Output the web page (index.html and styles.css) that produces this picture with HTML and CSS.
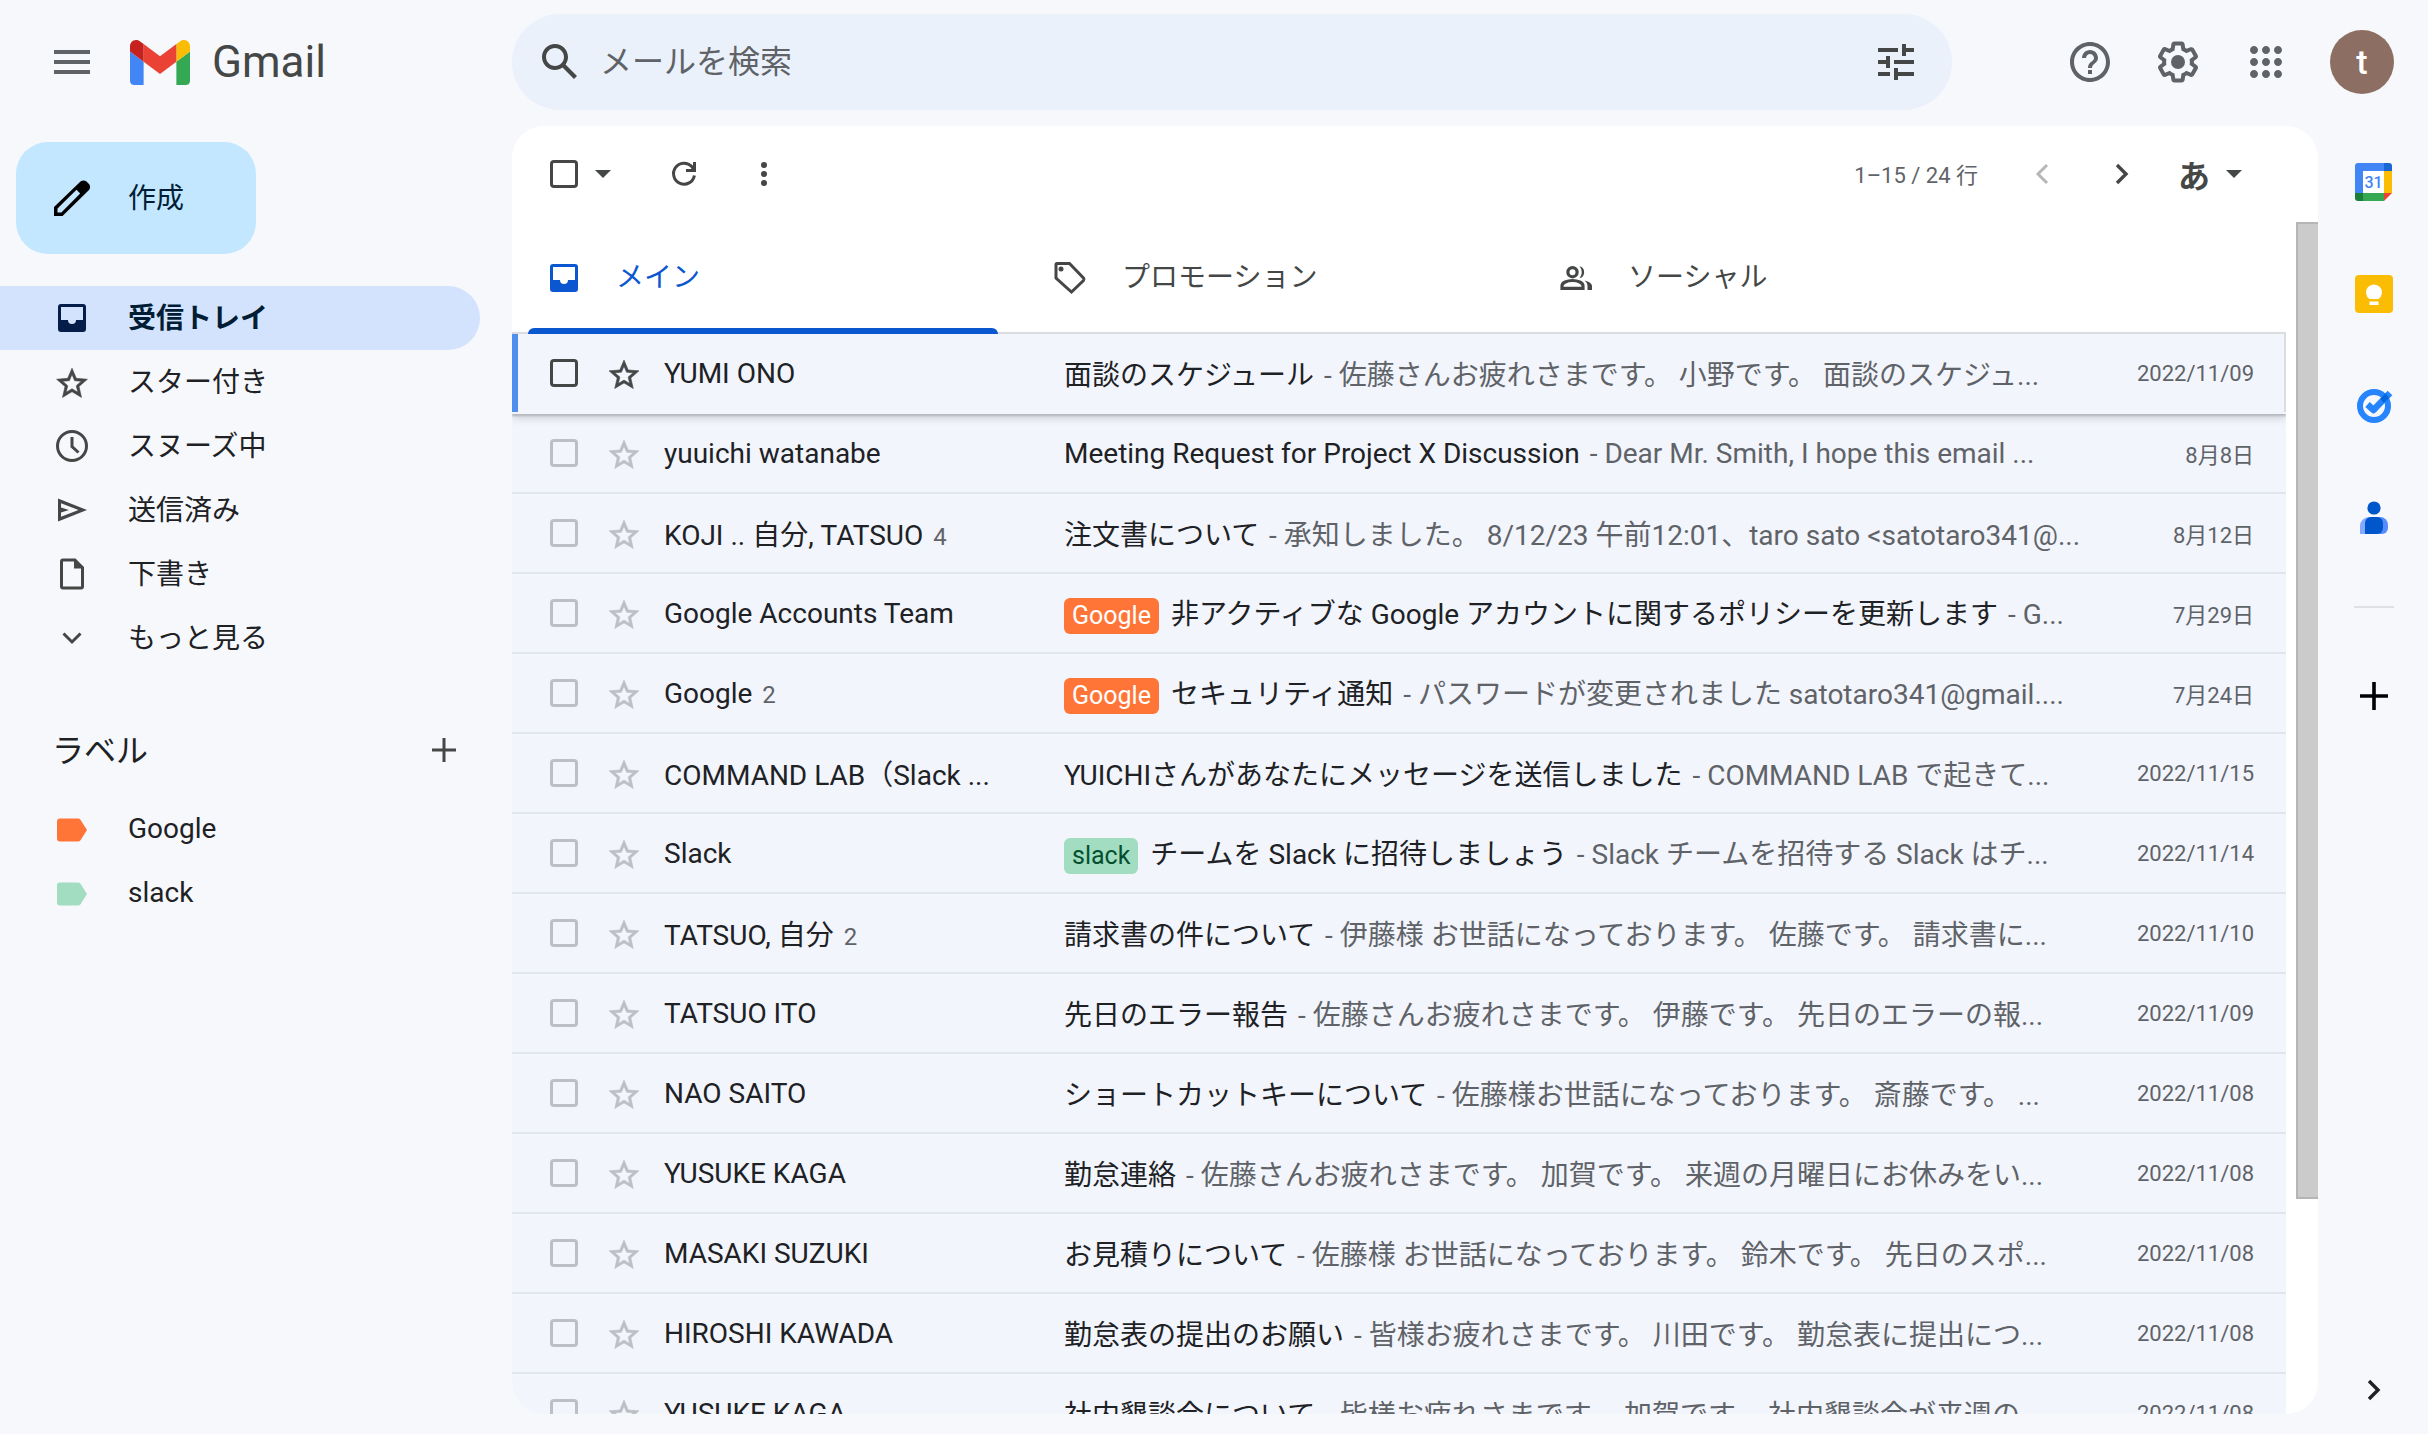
FILE: index.html
```html
<!DOCTYPE html>
<html lang="ja">
<head>
  <meta charset="UTF-8">
  <meta name="viewport" content="width=device-width, initial-scale=1.0">
  <title>受信トレイ - Gmail</title>

  <link rel="stylesheet" href="styles.css">
</head>
<body>

  <!-- Shared icons -->
  <svg class="sprite" aria-hidden="true">
    <symbol id="i-inbox" viewBox="0 0 40 40"><path fill-rule="evenodd" d="M9 6h22a3 3 0 0 1 3 3v22a3 3 0 0 1-3 3H9a3 3 0 0 1-3-3V9a3 3 0 0 1 3-3zM9 9v13h7a4 4 0 0 0 8 0h7V9z"/></symbol>
    <symbol id="i-star" viewBox="0 0 24 24"><path stroke="currentColor" stroke-width=".4" d="M22 9.24l-7.19-.62L12 2 9.19 8.63 2 9.24l5.46 4.73L5.82 21 12 17.27 18.18 21l-1.63-7.03L22 9.24zM12 15.4l-3.76 2.27 1-4.28-3.32-2.88 4.38-.38L12 6.1l1.71 4.04 4.38.38-3.32 2.88 1 4.28L12 15.4z"/></symbol>
    <symbol id="i-drop" viewBox="0 0 24 24"><path d="M4 8h16l-8 8z"/></symbol>
    <symbol id="i-label" viewBox="0 0 40 40"><path d="M8 8.500h18a3 3 0 0 1 2.500 1.300L35 20l-6.500 10.200a3 3 0 0 1-2.500 1.300H8a3 3 0 0 1-3-3v-17a3 3 0 0 1 3-3z"/></symbol>
    <symbol id="i-next" viewBox="0 0 40 40"><path d="M15 11l9 9-9 9" fill="none" stroke="currentColor" stroke-width="3.400"/></symbol>
  </svg>

  <!-- Top bar -->
  <header class="topbar">
    <div class="brand">
      <button class="icon-btn menu-btn" aria-label="メインメニュー">
        <svg width="36" height="24" viewBox="0 0 36 24"><path d="M0 0h36v4H0zM0 10h36v4H0zM0 20h36v4H0z"/></svg>
      </button>
      <a class="logo" href="#">
        <svg width="60" height="45" viewBox="52 42 88 66" aria-hidden="true">
          <path fill="#4285f4" d="M58 108h14V74L52 59v43c0 3.32 2.69 6 6 6"/>
          <path fill="#34a853" d="M120 108h14c3.32 0 6-2.69 6-6V59l-20 15"/>
          <path fill="#fbbc04" d="M120 48v26l20-15v-8c0-7.42-8.47-11.65-14.4-7.2"/>
          <path fill="#ea4335" d="M72 74V48l24 18 24-18v26L96 92"/>
          <path fill="#c5221f" d="M52 51v8l20 15V48l-5.6-4.2c-5.94-4.45-14.4-.22-14.4 7.2"/>
        </svg>
        <span>Gmail</span>
      </a>
    </div>

    <form class="search">
      <button class="icon-btn" type="button" aria-label="検索">
        <svg width="48" height="48" viewBox="0 0 24 24"><path d="M20.49 19l-5.73-5.73C15.53 12.2 16 10.91 16 9.5 16 5.91 13.09 3 9.5 3S3 5.91 3 9.5 5.91 16 9.5 16c1.410 0 2.700-.47 3.770-1.240L19 20.490 20.490 19zM5 9.500C5 7.010 7.010 5 9.500 5S14 7.010 14 9.500 11.990 14 9.500 14 5 11.990 5 9.500z"/></svg>
      </button>
      <input type="text" placeholder="メールを検索" aria-label="メールを検索">
      <button class="icon-btn" type="button" aria-label="検索オプション">
        <svg width="48" height="48" viewBox="0 0 24 24"><path d="M3 17v2h6v-2H3zM3 5v2h10V5H3zm10 16v-2h8v-2h-8v-2h-2v6h2zM7 9v2H3v2h4v2h2V9H7zm14 4v-2H11v2h10zm-6-4h2V7h4V5h-4V3h-2v6z"/></svg>
      </button>
    </form>

    <div class="account">
      <button class="icon-btn" aria-label="サポート">
        <svg width="48" height="48" viewBox="0 0 24 24"><path d="M11 18h2v-2h-2v2zm1-16C6.480 2 2 6.480 2 12s4.480 10 10 10 10-4.480 10-10S17.520 2 12 2zm0 18c-4.410 0-8-3.590-8-8s3.590-8 8-8 8 3.590 8 8-3.590 8-8 8zm0-14c-2.210 0-4 1.790-4 4h2c0-1.100.9-2 2-2s2 .9 2 2c0 2-3 1.750-3 5h2c0-2.250 3-2.500 3-5 0-2.210-1.790-4-4-4z"/></svg>
      </button>
      <button class="icon-btn" aria-label="設定">
        <svg width="48" height="48" viewBox="0 0 24 24"><path d="M13.85 22.25h-3.7c-.74 0-1.36-.54-1.45-1.27l-.27-1.89c-.27-.14-.53-.29-.79-.46l-1.8.72c-.7.26-1.47-.03-1.81-.65L2.2 15.53c-.35-.66-.2-1.44.36-1.88l1.53-1.19c-.01-.15-.02-.3-.02-.46 0-.15.01-.31.02-.46l-1.52-1.19c-.59-.45-.74-1.26-.37-1.88l1.85-3.19c.34-.62 1.11-.9 1.79-.63l1.81.73c.26-.17.52-.32.78-.46l.27-1.91c.09-.7.71-1.25 1.44-1.25h3.7c.74 0 1.36.54 1.45 1.27l.27 1.89c.27.14.53.29.79.46l1.8-.72c.71-.26 1.48.03 1.82.65l1.84 3.18c.36.66.2 1.44-.36 1.88l-1.52 1.19c.01.15.02.3.02.46s-.01.31-.02.46l1.52 1.19c.56.45.72 1.23.37 1.86l-1.86 3.22c-.34.62-1.11.9-1.8.63l-1.8-.72c-.26.17-.52.32-.78.46l-.27 1.91c-.1.68-.72 1.22-1.46 1.22zm-3.23-2h2.76l.37-2.55.53-.22c.44-.18.88-.44 1.34-.78l.45-.34 2.38.96 1.38-2.4-2.03-1.58.07-.56c.03-.26.06-.51.06-.78s-.03-.53-.06-.78l-.07-.56 2.03-1.58-1.39-2.4-2.39.96-.45-.35c-.42-.32-.87-.58-1.33-.77l-.52-.22-.37-2.55h-2.76l-.37 2.55-.53.21c-.44.19-.88.44-1.34.79l-.45.33-2.38-.95-1.39 2.39 2.03 1.58-.07.56a7 7 0 0 0-.06.79c0 .26.02.53.06.78l.07.56-2.03 1.58 1.38 2.4 2.39-.96.45.35c.43.33.86.58 1.33.77l.53.22.38 2.55z"/><circle cx="12" cy="12" r="3.5"/></svg>
      </button>
      <button class="icon-btn" aria-label="Google アプリ">
        <svg width="48" height="48" viewBox="0 0 24 24"><path d="M6 8c1.100 0 2-.9 2-2s-.9-2-2-2-2 .9-2 2 .9 2 2 2zm6 12c1.100 0 2-.9 2-2s-.9-2-2-2-2 .9-2 2 .9 2 2 2zm-6 0c1.100 0 2-.9 2-2s-.9-2-2-2-2 .9-2 2 .9 2 2 2zm0-6c1.100 0 2-.9 2-2s-.9-2-2-2-2 .9-2 2 .9 2 2 2zm6 0c1.100 0 2-.9 2-2s-.9-2-2-2-2 .9-2 2 .9 2 2 2zm4-8c0 1.100.9 2 2 2s2-.9 2-2-.9-2-2-2-2 .9-2 2zm-4 2c1.100 0 2-.9 2-2s-.9-2-2-2-2 .9-2 2 .9 2 2 2zm6 6c1.100 0 2-.9 2-2s-.9-2-2-2-2 .9-2 2 .9 2 2 2zm0 6c1.100 0 2-.9 2-2s-.9-2-2-2-2 .9-2 2 .9 2 2 2z"/></svg>
      </button>
      <button class="avatar" aria-label="Google アカウント">t</button>
    </div>
  </header>

  <div class="layout">

    <!-- Sidebar -->
    <aside class="sidebar">
      <button class="compose">
        <svg width="40" height="40" viewBox="0 0 40 40"><path fill-rule="evenodd" d="M2 38V29L28.500 3.500a5 5 0 0 1 6 0l2.500 2.500a5 5 0 0 1 0 6L10.500 38zM5.500 30.500v4h3.800L28.200 15.500l-3.700-3.700z"/></svg>
        作成
      </button>

      <nav class="folders">
        <a class="active" href="#"><svg width="40" height="40"><use href="#i-inbox"/></svg>受信トレイ</a>
        <a href="#"><svg width="40" height="40" viewBox="-1 -2 26 26"><use href="#i-star" width="24" height="24"/></svg>スター付き</a>
        <a href="#"><svg width="40" height="40" viewBox="0 0 40 40"><g fill="none" stroke="currentColor" stroke-width="3"><circle cx="20" cy="20" r="14.500"/><path d="M20 11v9.500l6.500 6"/></g></svg>スヌーズ中</a>
        <a href="#"><svg width="40" height="40" viewBox="0 0 40 40"><path fill-rule="evenodd" d="M6 8.500L35 20 6 31.500zM9 13.200v4.400l8 2.400-8 2.400v4.400L26.500 20z"/></svg>送信済み</a>
        <a href="#"><svg width="40" height="40" viewBox="0 0 40 40"><path fill-rule="evenodd" d="M11 4.500h12.500l8.500 8.500v19.500a3 3 0 0 1-3 3H11a3 3 0 0 1-3-3v-25a3 3 0 0 1 3-3zM11 7.500v25h18v-18h-7v-7z"/></svg>下書き</a>
        <a href="#"><svg width="40" height="40" viewBox="0 0 40 40"><path d="M11.500 15.500l8.500 8.500 8.500-8.500" fill="none" stroke="currentColor" stroke-width="3"/></svg>もっと見る</a>
      </nav>

      <div class="labels-head">
        <h2>ラベル</h2>
        <button class="icon-btn" aria-label="新しいラベルを作成">
          <svg width="24" height="24" viewBox="0 0 24 24"><path d="M10.500 0h3v10.500H24v3H13.500V24h-3V13.500H0v-3h10.500z"/></svg>
        </button>
      </div>
      <nav class="folders">
        <a href="#"><svg class="label-google" width="40" height="40"><use href="#i-label"/></svg>Google</a>
        <a href="#"><svg class="label-slack" width="40" height="40"><use href="#i-label"/></svg>slack</a>
      </nav>
    </aside>

    <!-- Mail list -->
    <main class="card">
      <div class="toolbar">
        <input type="checkbox" class="check dark" aria-label="選択">
        <button class="icon-btn narrow" aria-label="選択メニュー"><svg width="24" height="24"><use href="#i-drop"/></svg></button>
        <button class="icon-btn refresh" aria-label="更新">
          <svg width="40" height="40" viewBox="0 0 40 40"><g fill="none" stroke="currentColor" stroke-width="3"><path d="M30.400 21.500A10.500 10.500 0 1 1 27.800 12.600l2 3"/><path d="M30.500 8v8.500H22"/></g></svg>
        </button>
        <button class="icon-btn" aria-label="その他">
          <svg width="40" height="40" viewBox="0 0 40 40"><circle cx="20" cy="11" r="3"/><circle cx="20" cy="20" r="3"/><circle cx="20" cy="29" r="3"/></svg>
        </button>
        <span class="pager">1–15 / 24 行</span>
        <button class="icon-btn prev" aria-label="前"><svg width="40" height="40" viewBox="0 0 40 40"><path d="M25 11l-9 9 9 9" fill="none" stroke="currentColor" stroke-width="3"/></svg></button>
        <button class="icon-btn" aria-label="次"><svg width="40" height="40"><use href="#i-next"/></svg></button>
        <button class="input-tool">あ<svg width="24" height="24"><use href="#i-drop"/></svg></button>
      </div>

      <div class="scroll-area">
        <div class="pane">
          <div class="tabs" role="tablist">
            <button class="tab active" role="tab"><svg width="40" height="40"><use href="#i-inbox"/></svg>メイン</button>
            <button class="tab" role="tab"><svg width="40" height="40" viewBox="0 0 40 40"><path d="M7 5.500h12.500L33.500 20a2 2 0 0 1 0 2.500L21.500 34 6 20V6.500a1 1 0 0 1 1-1z" fill="none" stroke="currentColor" stroke-width="3"/><circle cx="11" cy="11" r="2.500"/></svg>プロモーション</button>
            <button class="tab" role="tab"><svg width="40" height="40" viewBox="0 0 40 40"><g fill="none" stroke="currentColor" stroke-width="3.200"><circle cx="16.500" cy="14.200" r="4.600"/><path d="M6 30.400h21v-2.600c0-3-5-5.300-10.500-5.300S6 24.800 6 27.800z"/></g><path d="M23.500 8.200a6.200 6.200 0 0 1 0 12 9 9 0 0 0 0-12zM28.500 22.500c4.500.9 7.500 3 7.500 5.700V32h-4.500v-4c0-2.200-1-4-3-5.500z"/></svg>ソーシャル</button>
          </div>

          <table class="mails">
            <colgroup><col class="c-check"><col class="c-star"><col class="c-from"><col><col class="c-date"></colgroup>
            <tbody>
              <tr class="focused">
                <td><input type="checkbox" class="check dark" aria-label="YUMI ONO"></td>
                <td><button class="star dark" aria-label="スター"><svg width="36" height="36"><use href="#i-star"/></svg></button></td>
                <td>YUMI ONO</td>
                <td>面談のスケジュール<span> - 佐藤さんお疲れさまです。 小野です。 面談のスケジュ...</span></td>
                <td>2022/11/09</td>
              </tr>
              <tr>
                <td><input type="checkbox" class="check" aria-label="yuuichi watanabe"></td>
                <td><button class="star" aria-label="スター"><svg width="36" height="36"><use href="#i-star"/></svg></button></td>
                <td>yuuichi watanabe</td>
                <td>Meeting Request for Project X Discussion<span> - Dear Mr. Smith, I hope this email ...</span></td>
                <td>8月8日</td>
              </tr>
              <tr>
                <td><input type="checkbox" class="check" aria-label="KOJI, 自分, TATSUO"></td>
                <td><button class="star" aria-label="スター"><svg width="36" height="36"><use href="#i-star"/></svg></button></td>
                <td>KOJI .. 自分, TATSUO <small>4</small></td>
                <td>注文書について<span> - 承知しました。 8/12/23 午前12:01、taro sato &lt;satotaro341@...</span></td>
                <td>8月12日</td>
              </tr>
              <tr>
                <td><input type="checkbox" class="check" aria-label="Google Accounts Team"></td>
                <td><button class="star" aria-label="スター"><svg width="36" height="36"><use href="#i-star"/></svg></button></td>
                <td>Google Accounts Team</td>
                <td><b class="tag">Google</b>非アクティブな Google アカウントに関するポリシーを更新します<span> - G...</span></td>
                <td>7月29日</td>
              </tr>
              <tr>
                <td><input type="checkbox" class="check" aria-label="Google"></td>
                <td><button class="star" aria-label="スター"><svg width="36" height="36"><use href="#i-star"/></svg></button></td>
                <td>Google <small>2</small></td>
                <td><b class="tag">Google</b>セキュリティ通知<span> - パスワードが変更されました satotaro341@gmail....</span></td>
                <td>7月24日</td>
              </tr>
              <tr>
                <td><input type="checkbox" class="check" aria-label="COMMAND LAB"></td>
                <td><button class="star" aria-label="スター"><svg width="36" height="36"><use href="#i-star"/></svg></button></td>
                <td>COMMAND LAB（Slack ...</td>
                <td>YUICHIさんがあなたにメッセージを送信しました<span> - COMMAND LAB で起きて...</span></td>
                <td>2022/11/15</td>
              </tr>
              <tr>
                <td><input type="checkbox" class="check" aria-label="Slack"></td>
                <td><button class="star" aria-label="スター"><svg width="36" height="36"><use href="#i-star"/></svg></button></td>
                <td>Slack</td>
                <td><b class="tag green">slack</b>チームを Slack に招待しましょう<span> - Slack チームを招待する Slack はチ...</span></td>
                <td>2022/11/14</td>
              </tr>
              <tr>
                <td><input type="checkbox" class="check" aria-label="TATSUO, 自分"></td>
                <td><button class="star" aria-label="スター"><svg width="36" height="36"><use href="#i-star"/></svg></button></td>
                <td>TATSUO, 自分 <small>2</small></td>
                <td>請求書の件について<span> - 伊藤様 お世話になっております。 佐藤です。 請求書に...</span></td>
                <td>2022/11/10</td>
              </tr>
              <tr>
                <td><input type="checkbox" class="check" aria-label="TATSUO ITO"></td>
                <td><button class="star" aria-label="スター"><svg width="36" height="36"><use href="#i-star"/></svg></button></td>
                <td>TATSUO ITO</td>
                <td>先日のエラー報告<span> - 佐藤さんお疲れさまです。 伊藤です。 先日のエラーの報...</span></td>
                <td>2022/11/09</td>
              </tr>
              <tr>
                <td><input type="checkbox" class="check" aria-label="NAO SAITO"></td>
                <td><button class="star" aria-label="スター"><svg width="36" height="36"><use href="#i-star"/></svg></button></td>
                <td>NAO SAITO</td>
                <td>ショートカットキーについて<span> - 佐藤様お世話になっております。 斎藤です。 ...</span></td>
                <td>2022/11/08</td>
              </tr>
              <tr>
                <td><input type="checkbox" class="check" aria-label="YUSUKE KAGA"></td>
                <td><button class="star" aria-label="スター"><svg width="36" height="36"><use href="#i-star"/></svg></button></td>
                <td>YUSUKE KAGA</td>
                <td>勤怠連絡<span> - 佐藤さんお疲れさまです。 加賀です。 来週の月曜日にお休みをい...</span></td>
                <td>2022/11/08</td>
              </tr>
              <tr>
                <td><input type="checkbox" class="check" aria-label="MASAKI SUZUKI"></td>
                <td><button class="star" aria-label="スター"><svg width="36" height="36"><use href="#i-star"/></svg></button></td>
                <td>MASAKI SUZUKI</td>
                <td>お見積りについて<span> - 佐藤様 お世話になっております。 鈴木です。 先日のスポ...</span></td>
                <td>2022/11/08</td>
              </tr>
              <tr>
                <td><input type="checkbox" class="check" aria-label="HIROSHI KAWADA"></td>
                <td><button class="star" aria-label="スター"><svg width="36" height="36"><use href="#i-star"/></svg></button></td>
                <td>HIROSHI KAWADA</td>
                <td>勤怠表の提出のお願い<span> - 皆様お疲れさまです。 川田です。 勤怠表に提出につ...</span></td>
                <td>2022/11/08</td>
              </tr>
              <tr>
                <td><input type="checkbox" class="check" aria-label="YUSUKE KAGA"></td>
                <td><button class="star" aria-label="スター"><svg width="36" height="36"><use href="#i-star"/></svg></button></td>
                <td>YUSUKE KAGA</td>
                <td>社内懇談会について<span> - 皆様お疲れさまです。 加賀です。 社内懇談会が来週の...</span></td>
                <td>2022/11/08</td>
              </tr>
            </tbody>
          </table>
        </div>
        <div class="scrollbar"><div class="thumb"></div></div>
      </div>
    </main>

    <!-- Side panel with add-ons -->
    <aside class="rail">
      <a href="#" aria-label="カレンダー">
        <svg width="40" height="40" viewBox="0 0 40 40">
          <path fill="#4285f4" d="M4 1h26v8H9v22H1V4a3 3 0 0 1 3-3z"/>
          <path fill="#1967d2" d="M30 1h5a3 3 0 0 1 3 3v5h-8z"/>
          <path fill="#fff" d="M9 9h21v22H9z"/>
          <path fill="#fbbc04" d="M30 9h8v22h-8z"/>
          <path fill="#34a853" d="M9 31h21v8H9z"/>
          <path fill="#188038" d="M1 31h8v8H4a3 3 0 0 1-3-3z"/>
          <path fill="#ea4335" d="M30 31h8l-8 8z"/>
          <text x="19.500" y="26" text-anchor="middle">31</text>
        </svg>
      </a>
      <a href="#" aria-label="Keep">
        <svg width="40" height="40" viewBox="0 0 40 40"><rect x="1" y="1" width="38" height="38" rx="4" fill="#fbbc04"/><path fill="#fff" d="M15.500 25a8 8 0 1 1 9 0zM15.500 27.500h9V31h-9z"/></svg>
      </a>
      <a href="#" aria-label="ToDo リスト">
        <svg width="40" height="40" viewBox="0 0 40 40"><circle cx="20" cy="20" r="14" fill="none" stroke="#2684fc" stroke-width="6"/><path d="M13.500 18.500l6 5.500L36 7" fill="none" stroke="#2684fc" stroke-width="6.500" stroke-linejoin="round"/><path fill="#0066da" d="M31.800 7.200l3.200 5-5.500 4.600-3.200-4.200z"/></svg>
      </a>
      <a href="#" aria-label="連絡先">
        <svg width="40" height="40" viewBox="0 0 40 40"><circle cx="20" cy="10" r="6.600" fill="#0057cc"/><path fill="#86a9ff" d="M15 19h9v17H6v-8a9 9 0 0 1 9-9z"/><path fill="#578cff" d="M18 19h8a8 8 0 0 1 8 8v3a6 6 0 0 1-6 6H18z"/><path fill="#0057cc" d="M17 19h6a6 6 0 0 1 6 6v5a6 6 0 0 1-6 6H11V25a6 6 0 0 1 6-6z"/></svg>
      </a>
      <hr>
      <a href="#" aria-label="アドオンを取得">
        <svg width="28" height="28" viewBox="0 0 28 28"><path d="M12.200 0h3.600v12.200H28v3.600H15.800V28h-3.600V15.800H0v-3.600h12.200z"/></svg>
      </a>
      <button class="icon-btn collapse" aria-label="サイドパネルを非表示"><svg width="40" height="40"><use href="#i-next"/></svg></button>
    </aside>

  </div>
</body>
</html>
```
FILE: styles.css
```css
* {
  margin: 0;
  padding: 0;
  box-sizing: border-box;
}

body {
  font-family: Roboto, "Noto Sans CJK JP", sans-serif;
  font-size: 28px;
  color: #202124;
  background: #f6f8fc;
  display: flex;
  flex-direction: column;
  height: 100vh;
  overflow: hidden;
}

a {
  color: inherit;
  text-decoration: none;
}

button,
input {
  font: inherit;
  color: inherit;
  background: transparent;
  border: none;
}

button {
  cursor: pointer;
}

svg {
  fill: currentColor;
  flex-shrink: 0;
}

.sprite {
  display: none;
}

.icon-btn {
  width: 80px;
  height: 80px;
  display: flex;
  align-items: center;
  justify-content: center;
  flex-shrink: 0;
  color: #444746;
}

/* top bar */

.topbar {
  display: flex;
  align-items: center;
  padding: 14px 34px 16px 0;
}

.brand {
  width: 512px;
  flex-shrink: 0;
  display: flex;
  align-items: center;
  padding-left: 32px;
}

.menu-btn {
  color: #5f6368;
}

.logo {
  display: flex;
  align-items: center;
  gap: 22px;
  margin-left: 18px;
  font-size: 44px;
  color: #444746;
}

.search {
  flex: 1;
  max-width: 1440px;
  height: 96px;
  border-radius: 48px;
  background: #eaf1fb;
  display: flex;
  align-items: center;
  padding: 0 16px 0 8px;
}

.search input {
  flex: 1;
  min-width: 0;
  font-size: 32px;
  outline: none;
}

.search input::placeholder {
  color: #5f6368;
}

.account {
  margin-left: auto;
  display: flex;
  align-items: center;
  gap: 8px;
}

.account .icon-btn {
  color: #5f6368;
}

.avatar {
  width: 64px;
  height: 64px;
  margin-left: 16px;
  border-radius: 50%;
  background: #8d6e63;
  color: #fff;
  font-size: 34px;
  font-weight: 500;
}

.layout {
  flex: 1;
  min-height: 0;
  display: flex;
}

/* sidebar */

.sidebar {
  width: 512px;
  flex-shrink: 0;
  padding-top: 16px;
}

.compose {
  display: flex;
  align-items: center;
  gap: 36px;
  width: 240px;
  height: 112px;
  margin: 0 0 32px 16px;
  padding: 0 0 4px 36px;
  border-radius: 32px;
  background: #c2e7ff;
  color: #001d35;
}

.compose svg {
  margin-top: 4px;
  color: #000;
}

.folders a {
  display: flex;
  align-items: center;
  gap: 36px;
  width: 480px;
  height: 64px;
  padding: 0 0 4px 52px;
  border-radius: 0 32px 32px 0;
}

.folders svg {
  margin-top: 4px;
  color: #444746;
}

.folders .active {
  background: #d3e3fd;
  color: #001d35;
  font-weight: bold;
}

.folders .active svg {
  color: #041e49;
}

.folders .label-google {
  color: #ff7537;
}

.folders .label-slack {
  color: #a2dcc1;
}

.labels-head {
  display: flex;
  align-items: center;
  justify-content: space-between;
  width: 484px;
  height: 64px;
  margin: 48px 0 16px;
  padding-left: 52px;
}

.labels-head h2 {
  padding-bottom: 4px;
  font-size: 32px;
  font-weight: normal;
}

/* mail card */

.card {
  flex: 1;
  min-width: 0;
  display: flex;
  flex-direction: column;
  margin-bottom: 20px;
  border-radius: 32px;
  background: #fff;
  overflow: hidden;
}

.toolbar {
  display: flex;
  align-items: center;
  height: 96px;
  flex-shrink: 0;
  padding: 0 72px 0 38px;
}

.check {
  appearance: none;
  display: block;
  flex-shrink: 0;
  width: 28px;
  height: 28px;
  border: 3px solid #bcbfc3;
  border-radius: 4px;
}

.check.dark {
  border-color: #444746;
}

.icon-btn.narrow {
  width: 50px;
}

.refresh {
  margin-left: 16px;
}

.pager {
  margin: 0 24px 0 auto;
  padding-bottom: 2px;
  font-size: 22px;
  color: #5f6368;
}

.icon-btn.prev {
  color: #b5b7b9;
}

.input-tool {
  display: flex;
  align-items: center;
  gap: 12px;
  margin-left: 16px;
  font-size: 32px;
  font-weight: bold;
  color: #444746;
}

.scroll-area {
  flex: 1;
  min-height: 0;
  display: flex;
  gap: 10px;
}

.pane {
  flex: 1;
  min-width: 0;
  overflow: hidden;
}

.scrollbar {
  width: 22px;
}

.thumb {
  height: 82%;
  background: #cbcbcb;
  border: 2px solid #b5b5b5;
  border-right: none;
}

.tabs {
  display: flex;
  height: 112px;
  position: relative;
  z-index: 1;
}

.tab {
  position: relative;
  display: flex;
  align-items: center;
  gap: 32px;
  width: 506px;
  padding: 0 0 6px 32px;
  color: #444746;
}

.tab svg {
  margin-top: 6px;
}

.tab.active {
  color: #0b57d0;
}

.tab.active::after {
  content: "";
  position: absolute;
  left: 16px;
  right: 20px;
  bottom: 0;
  height: 6px;
  border-radius: 6px 6px 0 0;
  background: #0b57d0;
}

.mails {
  width: 100%;
  table-layout: fixed;
  border-spacing: 0;
  background: #f2f5fc;
}

.c-check {
  width: 88px;
}

.c-star {
  width: 64px;
}

.c-from {
  width: 400px;
}

.c-date {
  width: 200px;
}

.mails td {
  height: 80px;
  border-bottom: 2px solid #e1e6ee;
  white-space: nowrap;
  overflow: hidden;
  vertical-align: middle;
}

.mails td:first-child {
  padding-left: 38px;
}

.mails td:last-child {
  padding-right: 32px;
  text-align: right;
  font-size: 22px;
  color: #5f6368;
}

.mails span {
  margin-left: 3px;
  color: #5f6368;
}

.mails small {
  margin-left: 3px;
  font-size: 24px;
  color: #5f6368;
}

.mails .focused {
  position: relative;
  box-shadow: 0 -2px 0 #dadce0, 0 2px 2px #b4b7bd, 0 4px 8px rgba(60, 64, 67, 0.2);
}

.focused td {
  border-bottom-color: transparent;
}

.focused td:first-child {
  box-shadow: inset 6px 0 0 #4f8ff0;
}

.focused td:last-child {
  box-shadow: inset -2px 0 0 #dadce0;
}

.star {
  display: flex;
  align-items: center;
  justify-content: center;
  width: 48px;
  height: 48px;
  padding-top: 4px;
  color: #bcbfc3;
}

.star.dark {
  color: #444746;
}

.tag {
  display: inline-block;
  height: 36px;
  margin-right: 12px;
  padding: 0 8px;
  border-radius: 6px;
  background: #ff7537;
  color: #fff;
  font-size: 25px;
  font-weight: normal;
  line-height: 36px;
}

.tag.green {
  background: #a2dcc1;
  color: #04502e;
}

/* side panel */

.rail {
  width: 110px;
  flex-shrink: 0;
  display: flex;
  flex-direction: column;
  align-items: center;
  padding-left: 2px;
}

.rail a {
  display: flex;
  align-items: center;
  justify-content: center;
  width: 100%;
  height: 112px;
  color: #000;
}

.rail text {
  font-size: 16px;
  font-weight: 500;
  fill: #4285f4;
}

.rail hr {
  width: 40px;
  height: 2px;
  margin: 32px 0;
  border: none;
  background: #e0e1e3;
}

.collapse {
  height: 88px;
  margin-top: auto;
  color: #202124;
}
```
